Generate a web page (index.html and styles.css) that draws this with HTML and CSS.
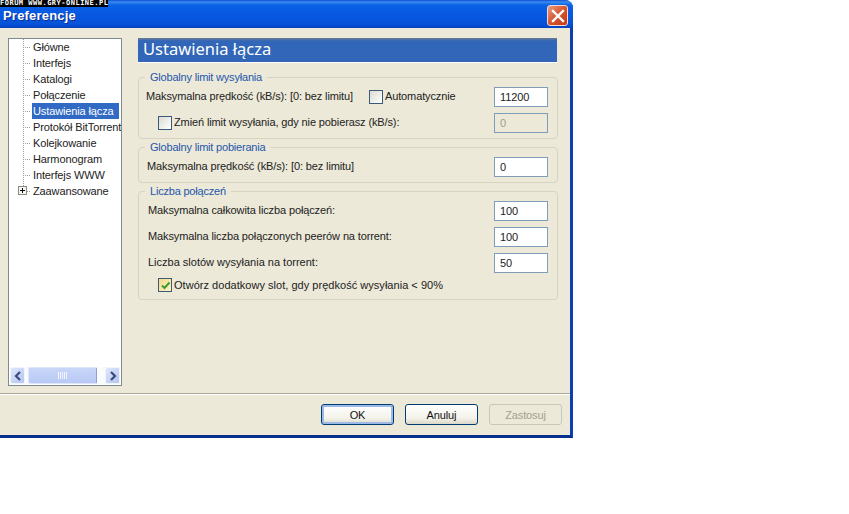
FILE: index.html
```html
<!DOCTYPE html>
<html lang="pl">
<head>
<meta charset="utf-8">
<title>Preferencje</title>
<link rel="stylesheet" href="styles.css">
</head>
<body>
<div class="window">
  <div class="watermark">FORUM WWW.GRY-ONLINE.PL</div>
  <header class="titlebar">
    <span class="title">Preferencje</span>
    <button class="close" aria-label="Zamknij">
      <svg width="14" height="14" viewBox="0 0 14 14"><path d="M2 2 12 12M12 2 2 12" stroke="#fff" stroke-width="2.4" stroke-linecap="square" fill="none"/></svg>
    </button>
  </header>
  <div class="content">
    <nav class="tree">
      <ul class="tree-list">
        <li class="tree-item">Główne</li>
        <li class="tree-item">Interfejs</li>
        <li class="tree-item">Katalogi</li>
        <li class="tree-item">Połączenie</li>
        <li class="tree-item"><span class="selected">Ustawienia łącza</span></li>
        <li class="tree-item">Protokół BitTorrent</li>
        <li class="tree-item">Kolejkowanie</li>
        <li class="tree-item">Harmonogram</li>
        <li class="tree-item">Interfejs WWW</li>
        <li class="tree-item last"><span class="expander"></span>Zaawansowane</li>
      </ul>
      <div class="scrollbar">
        <span class="sb-btn"><svg width="8" height="10" viewBox="0 0 8 10"><path d="M6 1 2 5l4 4" stroke="#3c4a80" stroke-width="2.2" fill="none"/></svg></span>
        <span class="sb-thumb"><svg width="9" height="7" viewBox="0 0 9 7"><path d="M.5 0v7M2.500 0v7M4.500 0v7M6.500 0v7M8.500 0v7" stroke="#f2f5fd" stroke-width="1"/></svg></span>
        <span class="sb-btn"><svg width="8" height="10" viewBox="0 0 8 10"><path d="M2 1l4 4-4 4" stroke="#3c4a80" stroke-width="2.2" fill="none"/></svg></span>
      </div>
    </nav>
    <main class="main">
      <h1 class="heading">Ustawienia łącza</h1>
      <section class="group g1">
        <div class="legend">Globalny limit wysyłania</div>
        <div class="row r1">
          <span class="label l-a">Maksymalna prędkość (kB/s): [0: bez limitu]</span>
          <span class="check c-auto"></span><span class="label">Automatycznie</span>
          <span class="field">11200</span>
        </div>
        <div class="row r2">
          <span class="check c-indent"></span><span class="label">Zmień limit wysyłania, gdy nie pobierasz (kB/s):</span>
          <span class="field disabled">0</span>
        </div>
      </section>
      <section class="group g2">
        <div class="legend">Globalny limit pobierania</div>
        <div class="row r1">
          <span class="label l-b">Maksymalna prędkość (kB/s): [0: bez limitu]</span>
          <span class="field">0</span>
        </div>
      </section>
      <section class="group g3">
        <div class="legend">Liczba połączeń</div>
        <div class="row r1">
          <span class="label l-c">Maksymalna całkowita liczba połączeń:</span>
          <span class="field">100</span>
        </div>
        <div class="row r2">
          <span class="label l-c">Maksymalna liczba połączonych peerów na torrent:</span>
          <span class="field">100</span>
        </div>
        <div class="row r2">
          <span class="label l-c wide">Liczba slotów wysyłania na torrent:</span>
          <span class="field">50</span>
        </div>
        <div class="row r-check">
          <span class="check c-indent checked"><svg width="11" height="11" viewBox="0 0 11 11"><path d="M2 5.500 4.500 8 9.500 2.500" stroke="#3f9b2f" stroke-width="2" fill="none"/></svg></span><span>Otwórz dodatkowy slot, gdy prędkość wysyłania &lt; 90%</span>
        </div>
      </section>
    </main>
  </div>
  <footer class="footer">
    <button class="btn default">OK</button>
    <button class="btn">Anuluj</button>
    <button class="btn off">Zastosuj</button>
  </footer>
</div>
</body>
</html>
```
FILE: styles.css
```css
* { box-sizing: border-box; }
html, body { margin: 0; padding: 0; background: #fff; }
body { font-family: "Liberation Sans", Arial, sans-serif; font-size: 11px; letter-spacing: -.12px; color: #222; height: 514px; overflow: hidden; }

.window { position: relative; width: 573px; height: 438px; background: #ece9d8; border-right: 3px solid #0a3fb0; border-bottom: 3px solid #062e8f; border-top-right-radius: 8px; display: flex; flex-direction: column; }

.watermark { position: absolute; left: 0; top: 0; width: 108px; height: 7px; background: #000; color: #fff; font-family: "DejaVu Sans Mono", monospace; font-weight: 700; font-size: 7px; line-height: 7px; letter-spacing: .5px; white-space: nowrap; overflow: hidden; }

.titlebar { height: 28px; margin-right: -3px; flex: none; display: flex; align-items: center; justify-content: space-between; padding: 5px 5px 2px 3px; border-top-right-radius: 8px; background: linear-gradient(#0a4fd6 0, #3c8cf0 2px, #0a62e6 5px, #0758e2 14px, #0653d8 24px, #0442c0 28px); }
.title { color: #fff; font-family: "Liberation Sans", sans-serif; font-weight: 700; font-size: 13px; letter-spacing: .2px; text-shadow: 1px 1px 0 #0a2f8c; }
.close { width: 21px; height: 21px; padding: 0; border: 1px solid #f3d9cf; border-radius: 3px; background: linear-gradient(135deg, #e8a083, #d8532c 50%, #c43a16); display: flex; align-items: center; justify-content: center; }

.content { flex: 1; display: flex; padding: 10px 0 7px 8px; gap: 16px; min-height: 0; }

.tree { width: 114px; height: 348px; flex: none; background: #fff; border: 1px solid #7f8a94; display: flex; flex-direction: column; overflow: hidden; }
.tree-list { list-style: none; margin: 0; padding: 0 0 0 14px; flex: 1; }
.tree-item { position: relative; height: 16px; line-height: 17px; padding-left: 10px; white-space: nowrap; background-image: repeating-linear-gradient(90deg, #9a9a9a 0 1px, transparent 1px 2px), repeating-linear-gradient(#9a9a9a 0 1px, transparent 1px 2px); background-size: 8px 1px, 1px 100%; background-position: 0 8px, 0 0; background-repeat: no-repeat; }
.tree-item.last { background-size: 8px 1px, 1px 8px; }
.selected { display: inline-block; background: #316ac5; color: #fff; height: 16px; line-height: 17px; padding: 0 0 0 1px; margin-left: -1px; width: 87px; overflow: hidden; vertical-align: top; }
.expander { position: absolute; left: -5px; top: 3px; width: 9px; height: 9px; border: 1px solid #8a8a80; background: linear-gradient(90deg, transparent 1px, #111 1px, #111 6px, transparent 6px) 0 3px / 100% 1px no-repeat, linear-gradient(transparent 1px, #111 1px, #111 6px, transparent 6px) 3px 0 / 1px 100% no-repeat, #f5f4ee; }

.scrollbar { height: 17px; margin: 0 1px 1px; display: flex; gap: 2px; background: #fafbff; align-items: stretch; }
.sb-btn { width: 15px; display: flex; align-items: center; justify-content: center; background: linear-gradient(135deg, #dfe7fb, #b3c5f0); border: 1px solid #f2f4fb; border-radius: 2px; }
.sb-thumb { width: 69px; margin-left: 1px; margin-right: 6px; display: flex; align-items: center; justify-content: center; background: linear-gradient(#c9d6f8, #b8c9f4); border: 1px solid #dfe6fa; border-right-color: #8fa0c8; border-radius: 2px; }

.main { width: 420px; flex: none; display: flex; flex-direction: column; }
.heading { margin: 0 1px 14px 0; height: 25px; font-family: "Noto Sans", sans-serif; letter-spacing: 0; background: linear-gradient(#6b7b92 0, #3166b8 3px, #3166b8 100%); border-bottom: 1px solid #fff; color: #fff; font-weight: 400; font-size: 16.500px; line-height: 21px; padding-left: 5px; }

.group { border: 1px solid #d6d3c2; border-radius: 4px; padding: 0 9px 0 0; }
.g1 { height: 62px; margin-bottom: 8px; }
.g2 { height: 36px; margin-bottom: 8px; }
.g3 { height: 109px; }
.legend { width: fit-content; height: 14px; margin: -8px 0 0 6px; padding: 0 5px; line-height: 14px; letter-spacing: -.2px; background: #ece9d8; color: #2456ac; }

.row { display: flex; align-items: center; height: 20px; white-space: nowrap; }
.r1 { margin-top: 3px; }
.r2 { margin-top: 6px; }
.r-check { margin-top: 2px; height: 20px; letter-spacing: .03px; }
.label { padding-bottom: 2px; }
.label.l-a { margin-left: 7px; }
.label.l-b { margin-left: 8px; }
.label.l-c { margin-left: 9px; }
.label.wide { letter-spacing: 0; }

.check { width: 14px; height: 14px; flex: none; border: 1px solid #3b5a78; background: linear-gradient(135deg, #dcdcd4, #fff); margin-right: 2px; display: inline-flex; align-items: center; justify-content: center; }
.c-auto { margin-left: 16px; }
.c-indent { margin-left: 19px; }
.checked { background: linear-gradient(135deg, #f4d98a, #fdf3c8); }

.field { margin-left: auto; width: 54px; height: 20px; flex: none; border: 1px solid #7f9db9; background: #fff; padding-left: 5px; line-height: 18px; }
.field.disabled { background: #ece9d8; color: #a09d8e; }

.footer { height: 42px; flex: none; border-top: 1px solid #aca899; box-shadow: inset 0 1px 0 #fff; display: flex; justify-content: flex-end; gap: 11px; padding: 10px 8px 0 0; }
.btn { width: 73px; height: 21px; padding: 0; font: inherit; letter-spacing: inherit; color: #111; border: 1px solid #003c74; border-radius: 3px; background: linear-gradient(#fff, #f3f2ea 70%, #dcd8c8); }
.btn.default { box-shadow: inset 0 0 0 2px #9db9e8; }
.btn.off { border-color: #c9c7ba; color: #a3a094; background: #ece9d8; }
```
